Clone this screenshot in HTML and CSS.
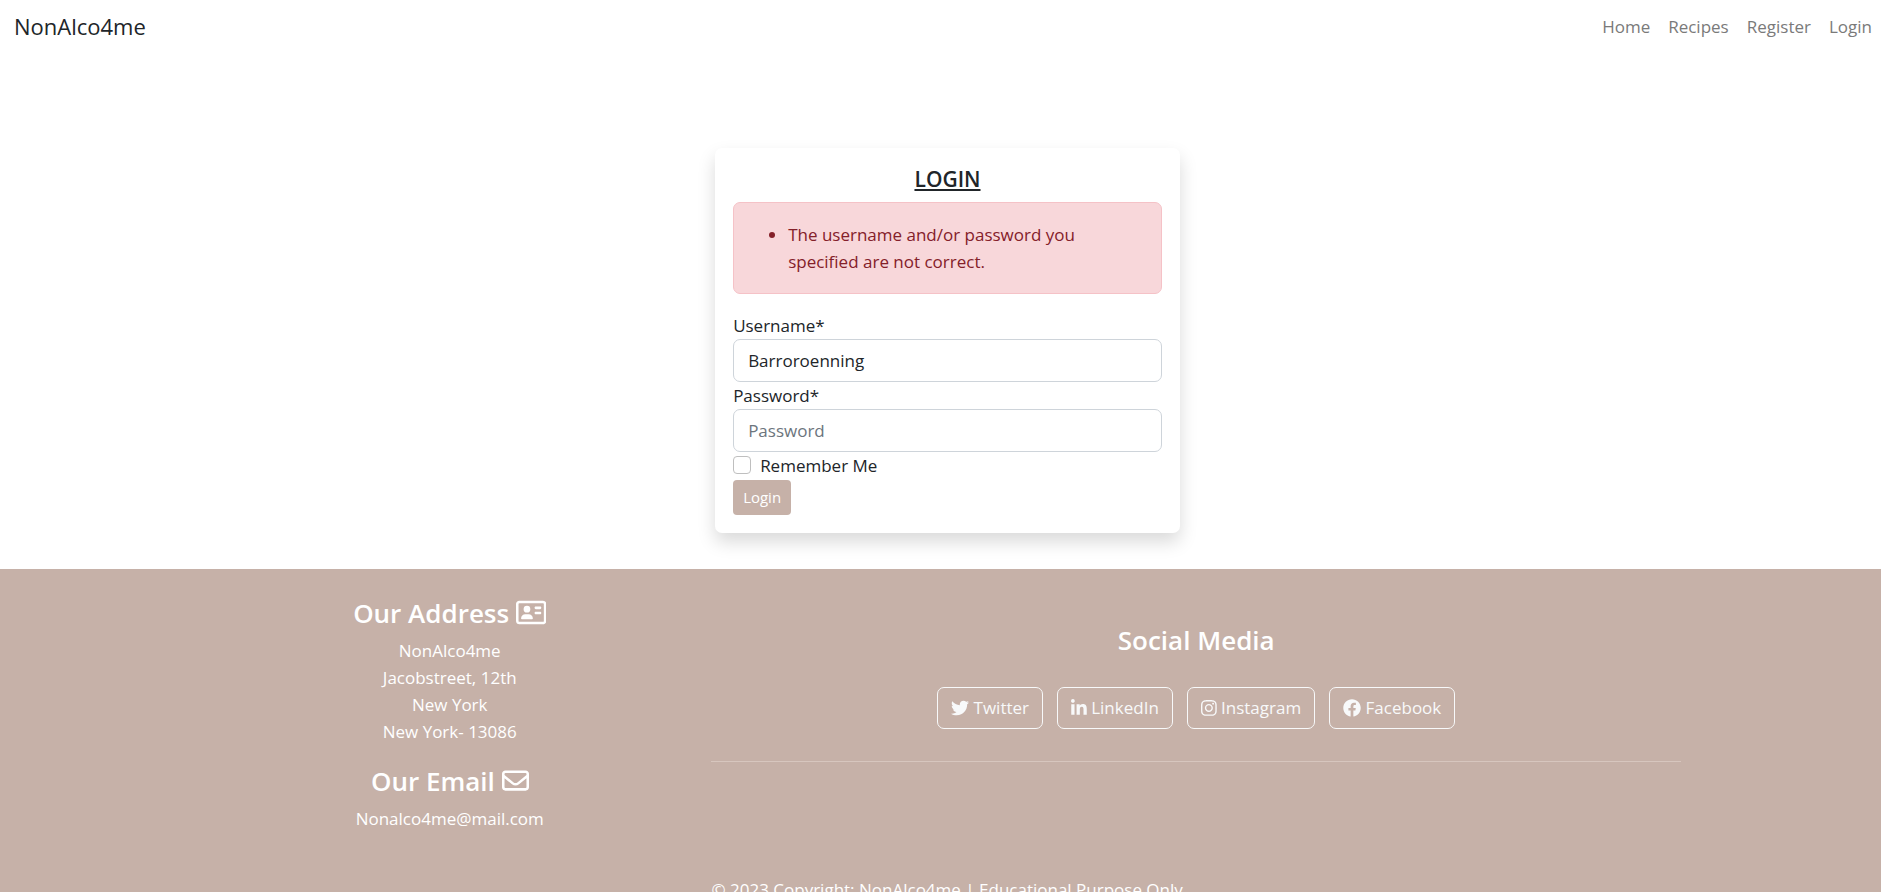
FILE: index.html
```html
<!DOCTYPE html>
<html lang="en">
<head>
<meta charset="utf-8">
<meta name="viewport" content="width=device-width, initial-scale=1">
<title>NonAlco4me</title>
<link rel="stylesheet" href="styles.css">
</head>
<body>
<nav class="navbar">
  <a class="brand" href="#">NonAlco4me</a>
  <div class="nav-links">
    <a href="#">Home</a>
    <a href="#">Recipes</a>
    <a href="#">Register</a>
    <a href="#">Login</a>
  </div>
</nav>

<main class="main">
  <form class="card">
    <h1 class="card-title">LOGIN</h1>
    <div class="alert" role="alert">
      <ul>
        <li>The username and/or password you specified are not correct.</li>
      </ul>
    </div>
    <label for="username">Username*</label>
    <input class="field" id="username" type="text" value="Barroroenning">
    <label for="password">Password*</label>
    <input class="field" id="password" type="password" placeholder="Password">
    <div class="check">
      <input id="remember" type="checkbox">
      <label for="remember">Remember Me</label>
    </div>
    <button class="submit" type="submit">Login</button>
  </form>
</main>

<footer class="footer">
  <section class="contact">
    <h2>Our Address <svg class="icon-card" viewBox="0 0 576 512" aria-hidden="true"><path fill-rule="evenodd" d="M64 32C28.700 32 0 60.700 0 96V416c0 35.300 28.700 64 64 64H512c35.300 0 64-28.700 64-64V96c0-35.300-28.700-64-64-64H64zM64 80H512a16 16 0 0 1 16 16V416a16 16 0 0 1-16 16H64a16 16 0 0 1-16-16V96a16 16 0 0 1 16-16z"/><path d="M208 256a64 64 0 1 0 0-128 64 64 0 1 0 0 128zm-32 32c-44.200 0-80 35.800-80 80c0 8.800 7.200 16 16 16H304c8.800 0 16-7.200 16-16c0-44.200-35.800-80-80-80H176zM376 144c-13.300 0-24 10.700-24 24s10.700 24 24 24h80c13.300 0 24-10.700 24-24s-10.700-24-24-24H376zm0 96c-13.300 0-24 10.700-24 24s10.700 24 24 24h80c13.300 0 24-10.700 24-24s-10.700-24-24-24H376z"/></svg></h2>
    <address>NonAlco4me<br>Jacobstreet, 12th<br>New York<br>New York- 13086</address>
    <h2>Our Email <svg class="icon-mail" viewBox="0 0 512 512" aria-hidden="true"><path d="M64 112c-8.800 0-16 7.200-16 16v22.100L220.500 291.700c20.700 17 50.400 17 71.100 0L464 150.100V128c0-8.800-7.200-16-16-16H64zM48 212.200V384c0 8.800 7.200 16 16 16H448c8.800 0 16-7.200 16-16V212.200L322 328.800c-38.400 31.500-93.700 31.500-132 0L48 212.200zM0 128C0 92.700 28.700 64 64 64H448c35.300 0 64 28.700 64 64V384c0 35.300-28.700 64-64 64H64c-35.300 0-64-28.700-64-64V128z"/></svg></h2>
    <p>Nonalco4me@mail.com</p>
  </section>
  <section class="social">
    <h2>Social Media</h2>
    <div class="social-links">
      <a href="#"><svg class="icon-wide" viewBox="0 0 512 512" aria-hidden="true"><path d="M459.37 151.716c.325 4.548.325 9.097.325 13.645 0 138.72-105.583 298.558-298.558 298.558-59.452 0-114.680-17.219-161.137-47.106 8.447.974 16.568 1.299 25.340 1.299 49.055 0 94.213-16.568 130.274-44.832-46.132-.975-84.792-31.188-98.112-72.772 6.498.974 12.995 1.624 19.818 1.624 9.421 0 18.843-1.300 27.614-3.573-48.081-9.747-84.143-51.980-84.143-102.985v-1.299c13.969 7.797 30.214 12.670 47.431 13.319-28.264-18.843-46.781-51.005-46.781-87.391 0-19.492 5.197-37.360 14.294-52.954 51.655 63.675 129.300 105.258 216.365 109.807-1.624-7.797-2.599-15.918-2.599-24.040 0-57.828 46.782-104.934 104.934-104.934 30.213 0 57.502 12.670 76.670 33.137 23.715-4.548 46.456-13.320 66.599-25.340-7.798 24.366-24.366 44.833-46.132 57.827 21.117-2.273 41.584-8.122 60.426-16.243-14.292 20.791-32.161 39.308-52.628 54.253z"/></svg> Twitter</a>
      <a href="#"><svg class="icon-narrow" viewBox="0 0 448 512" aria-hidden="true"><path d="M100.280 448H7.400V148.900h92.880zM53.790 108.100C24.090 108.100 0 83.500 0 53.800a53.790 53.790 0 0 1 107.580 0c0 29.700-24.100 54.300-53.790 54.300zM447.900 448h-92.680V302.400c0-34.700-.7-79.200-48.290-79.200-48.290 0-55.690 37.700-55.690 76.700V448h-92.780V148.900h89.080v40.800h1.300c12.400-23.500 42.690-48.300 87.880-48.300 94 0 111.280 61.900 111.280 142.300V448z"/></svg> LinkedIn</a>
      <a href="#"><svg class="icon-narrow" viewBox="0 0 448 512" aria-hidden="true"><path d="M224.100 141c-63.600 0-114.900 51.300-114.900 114.900s51.300 114.900 114.900 114.900S339 319.500 339 255.900 287.700 141 224.100 141zm0 189.600c-41.100 0-74.700-33.500-74.700-74.700s33.500-74.700 74.700-74.700 74.700 33.500 74.700 74.700-33.600 74.700-74.700 74.700zm146.400-194.300c0 14.900-12 26.800-26.800 26.800-14.900 0-26.800-12-26.800-26.800s12-26.800 26.800-26.800 26.800 12 26.800 26.800zm76.100 27.200c-1.700-35.900-9.900-67.700-36.200-93.900-26.200-26.200-58-34.400-93.900-36.200-37-2.100-147.900-2.100-184.900 0-35.800 1.700-67.600 9.900-93.900 36.100s-34.400 58-36.200 93.900c-2.100 37-2.100 147.900 0 184.900 1.700 35.900 9.900 67.700 36.200 93.900s58 34.400 93.900 36.200c37 2.100 147.900 2.100 184.900 0 35.900-1.700 67.700-9.900 93.900-36.200 26.200-26.200 34.400-58 36.200-93.900 2.100-37 2.100-147.800 0-184.800zM398.800 388c-7.800 19.600-22.900 34.700-42.600 42.600-29.500 11.700-99.500 9-132.100 9s-102.700 2.600-132.100-9c-19.600-7.800-34.700-22.900-42.600-42.600-11.700-29.500-9-99.500-9-132.100s-2.600-102.700 9-132.100c7.800-19.600 22.900-34.700 42.600-42.600 29.500-11.700 99.500-9 132.100-9s102.700-2.600 132.100 9c19.600 7.800 34.700 22.900 42.600 42.600 11.700 29.500 9 99.500 9 132.100s2.700 102.700-9 132.100z"/></svg> Instagram</a>
      <a href="#"><svg class="icon-wide" viewBox="0 0 512 512" aria-hidden="true"><path d="M504 256C504 119 393 8 256 8S8 119 8 256c0 123.780 90.690 226.380 209.250 245V327.690h-63V256h63v-54.640c0-62.150 37-96.480 93.670-96.480 27.140 0 55.520 4.840 55.520 4.840v61h-31.280c-30.800 0-40.410 19.120-40.410 38.730V256h68.780l-11 71.690h-57.780V501C413.310 482.380 504 379.780 504 256z"/></svg> Facebook</a>
    </div>
    <hr>
  </section>
  <p class="copyright">© 2023 Copyright: NonAlco4me | Educational Purpose Only</p>
</footer>
</body>
</html>
```
FILE: styles.css
```css
* {
  box-sizing: border-box;
}

body {
  margin: 0;
  font-family: "Segoe UI", "Open Sans", "Noto Sans", sans-serif;
  font-size: 17px;
  line-height: 27px;
  color: #212529;
  background: #fff;
}

h1, h2, p, ul {
  margin: 0;
}

a {
  text-decoration: none;
}

.navbar {
  display: flex;
  align-items: center;
  justify-content: space-between;
  padding: 9px 9px 9px 14px;
}

.brand {
  font-size: 22px;
  line-height: 34px;
  color: #212529;
}

.nav-links {
  display: flex;
  gap: 18px;
}

.nav-links a {
  color: #7a7a7a;
}

.main {
  display: flex;
  justify-content: center;
  padding: 96px 4px 36px 18px;
}

.card {
  display: flex;
  flex-direction: column;
  width: 25%;
  min-width: 320px;
  padding: 18px;
  border-radius: 7px;
  background: #fff;
  box-shadow: 0 9px 18px rgba(0, 0, 0, 0.15);
}

.card-title {
  margin-bottom: 9px;
  font-size: 21px;
  font-weight: 600;
  line-height: 27px;
  text-align: center;
  text-decoration: underline;
}

.alert {
  margin-bottom: 18px;
  padding: 18px;
  border: 1px solid #f5c2c7;
  border-radius: 7px;
  color: #842029;
  background: #f8d7da;
}

.alert ul {
  padding-left: 36px;
}

.field {
  width: 100%;
  padding: 7px 14px;
  border: 1px solid #ced4da;
  border-radius: 7px;
  font: inherit;
  color: #212529;
  background: #fff;
}

.field::placeholder {
  color: #6c757d;
  opacity: 1;
}

.check {
  display: flex;
  align-items: center;
  gap: 9px;
  height: 26px;
  margin-bottom: 2px;
}

.check input {
  appearance: none;
  width: 18px;
  height: 18px;
  margin: 0;
  border: 1px solid #bfbfbf;
  border-radius: 4px;
  background: #fff;
}

.check input:checked {
  background: #c6b1a8;
}

.submit {
  align-self: flex-start;
  padding: 4px 10px;
  border: 0;
  border-radius: 4px;
  font: inherit;
  font-size: 15px;
  line-height: 27px;
  color: #fff;
  background: #c6b1a8;
}

.footer {
  display: grid;
  grid-template-columns: 34fr 66fr;
  column-gap: 12px;
  padding: 28px 200px 24px;
  color: #fff;
  background: #c6b1a8;
}

.footer h2 {
  margin-bottom: 8px;
  font-size: 26px;
  font-weight: 600;
  line-height: 32px;
}

.footer svg {
  fill: currentColor;
}

.contact {
  text-align: center;
}

.contact address {
  margin-bottom: 20px;
  font-style: normal;
}

.icon-card,
.icon-mail {
  height: 27px;
  vertical-align: -3px;
}

.social {
  padding-top: 27px;
  text-align: center;
}

.social h2 {
  margin-bottom: 31px;
}

.social-links {
  display: flex;
  flex-wrap: wrap;
  justify-content: center;
  gap: 14px;
}

.social-links a {
  padding: 7px 13px;
  border: 1px solid #f8f9fa;
  border-radius: 7px;
  line-height: 26px;
  color: #f8f9fa;
}

.icon-wide,
.icon-narrow {
  height: 18px;
  vertical-align: -3px;
}

.social hr {
  height: 1px;
  margin: 32px 0 0;
  border: 0;
  background: #d7c6be;
}

.copyright {
  grid-column: 2;
  margin-top: 44px;
}
```
